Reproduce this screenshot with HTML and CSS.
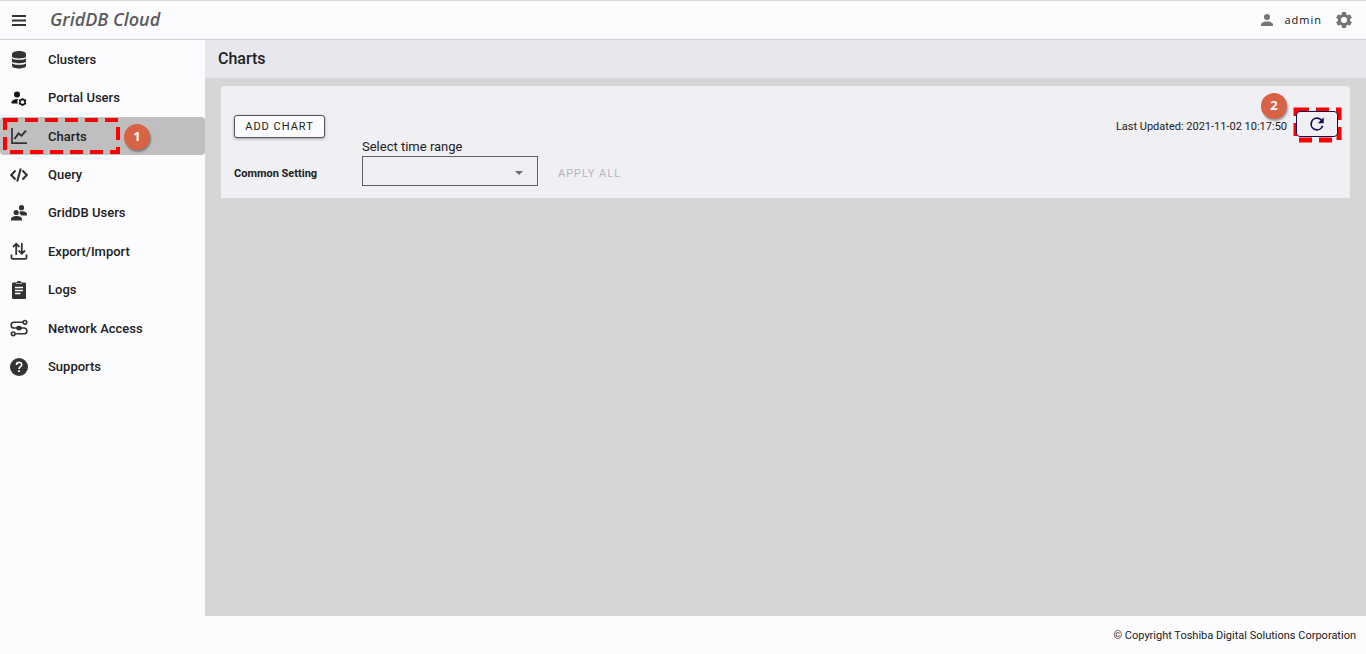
FILE: index.html
```
<!DOCTYPE html>
<html lang="en">
<head>
    <meta charset="utf-8">
    <title>GridDB Cloud</title>
    <meta name="viewport" content="width=device-width, initial-scale=1.0">
    <link rel="stylesheet" href="styles.css">
</head>
<body>

<header class="topbar">
    <button class="icon-button" aria-label="Menu">
        <svg width="20" height="20" viewBox="0 0 20 20"><path d="M3 6h14M3 10.500h14M3 15h14" stroke="#333" stroke-width="1.900"/></svg>
    </button>
    <a class="logo" href="#">GridDB Cloud</a>
    <a class="user" href="#">
        <svg width="18" height="18" viewBox="0 0 24 24" fill="#757575"><path d="M12 4a4 4 0 1 1 0 8 4 4 0 0 1 0-8m0 10c4.400 0 8 1.800 8 4v2H4v-2c0-2.200 3.600-4 8-4z"/></svg>
        admin
    </a>
    <button class="icon-button" aria-label="Settings">
        <svg width="20" height="20" viewBox="0 0 24 24" fill="#757575"><path d="M19.140 12.940c.04-.3.06-.61.06-.94 0-.32-.02-.64-.07-.94l2.030-1.580a.49.49 0 0 0 .12-.61l-1.920-3.320a.49.49 0 0 0-.59-.22l-2.390.96c-.5-.38-1.030-.7-1.620-.94l-.36-2.540a.48.48 0 0 0-.48-.41h-3.840c-.24 0-.43.17-.47.41l-.36 2.540c-.59.24-1.130.57-1.620.94l-2.390-.96a.48.48 0 0 0-.59.22L2.740 8.870a.48.48 0 0 0 .12.61l2.030 1.580c-.05.3-.09.63-.09.94s.02.64.07.94l-2.030 1.580a.49.49 0 0 0-.12.61l1.920 3.320c.12.22.37.29.59.22l2.390-.96c.5.38 1.030.7 1.620.94l.36 2.540c.05.24.24.41.48.41h3.840c.24 0 .44-.17.47-.41l.36-2.540c.59-.24 1.130-.56 1.620-.94l2.390.96c.22.08.47 0 .59-.22l1.920-3.320a.48.48 0 0 0-.12-.61zM12 15.600a3.600 3.600 0 1 1 0-7.200 3.600 3.600 0 0 1 0 7.200z"/></svg>
    </button>
</header>

<div class="layout">
    <nav class="sidebar">
        <a class="nav-item" href="#">
            <svg width="18" height="20" viewBox="0 0 18 20" fill="#333"><path d="M2 5c0-4 14-4 14 0v2.500c0 2.500-14 2.500-14 0z"/><path d="M2 9.300c2 2 12 2 14 0v3.200c0 2.300-14 2.300-14 0z"/><path d="M2 14.200c2 2 12 2 14 0v2.800c0 3.300-14 3.300-14 0z"/></svg>
            Clusters
        </a>
        <a class="nav-item" href="#">
            <svg width="18" height="20" viewBox="0 0 18 20" fill="#111"><circle cx="7" cy="6.500" r="3"/><path d="M1.500 15.500v-1c0-2.300 3-3.500 6.500-3.500-.8 1.500-.8 3 0 4.500z"/><circle cx="12.500" cy="14" r="2.600" fill="none" stroke="#111" stroke-width="1.500"/><path d="M12.500 10v1.500m0 5V18M9 12l1.400.8m4.200 2.400 1.400.8M9 16l1.400-.8m4.200-2.400 1.400-.8" stroke="#111" stroke-width="1.500"/></svg>
            Portal Users
        </a>
        <a class="nav-item active" href="#">
            <svg width="18" height="20" viewBox="0 0 18 20" fill="none" stroke="#333"><path d="M2 2v15.200h15" stroke-width="1.700"/><path d="m4.500 13 4-5.500 3 2.200 4.500-5" stroke-width="2"/></svg>
            Charts
            <svg class="marker" width="118" height="36" viewBox="0 0 118 36"><rect x="2" y="2" width="113" height="32" fill="none" stroke="red" stroke-width="4" stroke-dasharray="13 7"/></svg>
            <span class="badge badge-nav">1</span>
        </a>
        <a class="nav-item" href="#">
            <svg width="18" height="20" viewBox="0 0 18 20" fill="none" stroke="#333" stroke-width="2.100"><path d="M5.500 5.500 1.200 10l4.300 4.500M12.500 5.500l4.300 4.500-4.300 4.500M10.800 3.500 7.200 16.500"/></svg>
            Query
        </a>
        <a class="nav-item" href="#">
            <svg width="18" height="20" viewBox="0 0 18 20" fill="#333"><circle cx="11.500" cy="4.700" r="2.600"/><path d="M9.500 8.500c4-1 7.500.3 7.500 2.700v1.300h-5.500c-.6-.7-1.200-1-2-1.400.5-.8.500-1.700 0-2.600z"/><circle cx="6.200" cy="9.500" r="2.600"/><path d="M1 17.500v-1.300c0-4.300 11-4.300 11 0v1.300z"/></svg>
            GridDB Users
        </a>
        <a class="nav-item" href="#">
            <svg width="18" height="20" viewBox="0 0 18 20" fill="none" stroke="#333" stroke-width="1.800"><path d="M1.500 13.500v3.200c0 .8.500 1.200 1.200 1.200h12.600c.7 0 1.200-.4 1.200-1.200v-3.200M6.200 14V3M3 6l3.200-3.300L9.400 6M11.800 2v10M8.600 9.500l3.200 3.300L15 9.500"/></svg>
            Export/Import
        </a>
        <a class="nav-item" href="#">
            <svg width="18" height="20" viewBox="0 0 18 20"><path fill="#333" d="M3.500 2.500h3c.5-2 4.500-2 5 0h3c1 0 1.500.5 1.500 1.500v13.500c0 1-.5 1.500-1.500 1.500h-11c-1 0-1.500-.5-1.500-1.500V4c0-1 .5-1.500 1.500-1.500z"/><path d="M5 7.500h8M5 10.500h8M5 13.500h5.500" stroke="#fff" stroke-width="1.300"/><path d="M6 3.500h6" stroke="#aaa"/></svg>
            Logs
        </a>
        <a class="nav-item" href="#">
            <svg width="18" height="20" viewBox="0 0 18 20" fill="none" stroke="#333" stroke-width="1.600"><circle cx="15" cy="4.300" r="1.800"/><circle cx="3.200" cy="15.800" r="1.800"/><path d="M13.200 4.300H4a2.800 2.800 0 0 0 0 5.700h10a2.900 2.900 0 0 1 0 5.800H5"/><ellipse cx="9" cy="10" rx="2" ry="1.500" fill="#333"/></svg>
            Network Access
        </a>
        <a class="nav-item" href="#">
            <svg width="18" height="20" viewBox="0 0 18 20"><circle cx="9" cy="10" r="9" fill="#333"/><path d="M6.500 8c0-3.500 5.200-3.300 5.200-.3C11.700 9.700 9 9.700 9 12" fill="none" stroke="#fff" stroke-width="1.600"/><path d="M8.100 13.200h1.800V15H8.100z" fill="#fff"/></svg>
            Supports
        </a>
    </nav>

    <main class="content">
        <h1>Charts</h1>
        <section class="panel">
            <div class="panel-row">
                <button class="add-button">ADD CHART</button>
                <span class="updated">Last Updated: 2021-11-02 10:17:50</span>
                <div class="refresh">
                    <button class="refresh-button" aria-label="Refresh">
                        <svg width="20" height="20" viewBox="0 0 24 24" fill="#10104f"><path d="M17.650 6.350A7.960 7.960 0 0 0 12 4a8 8 0 1 0 7.730 10h-2.080A6 6 0 1 1 12 6c1.660 0 3.140.69 4.220 1.780L13 11h7V4z"/></svg>
                    </button>
                    <svg class="marker" width="50" height="36" viewBox="0 0 50 36"><rect x="3" y="3" width="43" height="30" fill="none" stroke="red" stroke-width="5" stroke-dasharray="13 7"/></svg>
                    <span class="badge badge-refresh">2</span>
                </div>
            </div>
            <div class="setting-row">
                <span class="setting-title">Common Setting</span>
                <div class="field">
                    <label for="timeRange">Select time range</label>
                    <select id="timeRange">
                        <option value=""></option>
                    </select>
                </div>
                <button class="apply-button" disabled>APPLY ALL</button>
            </div>
        </section>
    </main>
</div>

<footer>© Copyright Toshiba Digital Solutions Corporation</footer>

</body>
</html>
```

FILE: styles.css
```
* {
    box-sizing: border-box;
}
body {
    margin: 0;
    min-height: 100vh;
    display: flex;
    flex-direction: column;
    font-family: Roboto, "Liberation Sans", sans-serif;
    font-size: 13px;
    color: #212121;
    background: #fcfcfe;
}
a {
    color: inherit;
    text-decoration: none;
}
button {
    font-family: inherit;
    padding: 0;
    cursor: pointer;
}
svg {
    display: block;
    flex-shrink: 0;
}
.topbar {
    height: 40px;
    display: flex;
    align-items: center;
    padding: 0 12px 0 9px;
    border-top: 1px solid #d6d6d8;
    border-bottom: 1px solid #d0d0d4;
}
.icon-button {
    border: 0;
    background: none;
}
.logo {
    margin-left: 21px;
    padding-bottom: 3px;
    font-family: "Open Sans", "Noto Sans", sans-serif;
    font-size: 18px;
    font-weight: 600;
    font-style: italic;
    line-height: 24px;
    color: #5c5c5c;
}
.user {
    display: flex;
    align-items: center;
    gap: 8px;
    margin-left: auto;
    margin-right: 12px;
    font-family: "Open Sans", sans-serif;
    font-size: 11px;
    letter-spacing: 1px;
    line-height: 16px;
    color: #111;
}
.layout {
    flex: 1;
    display: flex;
}
.sidebar {
    width: 205px;
    height: 346px;
    display: flex;
    flex-direction: column;
}
.nav-item {
    position: relative;
    flex: 1;
    display: flex;
    align-items: center;
    gap: 20px;
    padding-left: 10px;
    font-weight: 500;
}
.nav-item.active {
    background: #bfbfbf;
    border-radius: 4px;
}
.marker {
    position: absolute;
    top: 1px;
    left: 3px;
    pointer-events: none;
}
.badge {
    position: absolute;
    width: 26px;
    height: 26px;
    border-radius: 50%;
    background: #d86344;
    box-shadow: 1px 2px 2px rgba(0, 0, 0, 0.35);
    color: #fff;
    font-family: "Open Sans", sans-serif;
    font-size: 13px;
    font-weight: bold;
    line-height: 25px;
    text-align: center;
}
.badge-nav {
    top: 7px;
    left: 124px;
}
.content {
    flex: 1;
    background: #d6d6d6;
}
h1 {
    margin: 0;
    padding: 0 13px;
    background: #e7e7ed;
    font-size: 16px;
    font-weight: 500;
    line-height: 38px;
}
.panel {
    margin: 8px 16px;
    padding: 22px 9px 12px 13px;
    border-radius: 4px 4px 0 0;
    background: #f0eff4;
}
.panel-row {
    display: flex;
    align-items: center;
    height: 36px;
}
.add-button {
    width: 91px;
    height: 23px;
    border: 1px solid #555;
    border-radius: 3px;
    background: #fcfcfe;
    box-shadow: 0 1px 3px rgba(0, 0, 0, 0.35);
    color: #212121;
    font-size: 11px;
    letter-spacing: 1px;
}
.updated {
    margin-left: auto;
    font-size: 11px;
}
.refresh {
    position: relative;
    margin-left: 6px;
    padding: 4px 3px 8px;
}
.refresh .marker {
    top: 0;
    left: 0;
}
.refresh-button {
    position: relative;
    z-index: 1;
    display: flex;
    align-items: center;
    justify-content: center;
    width: 42px;
    height: 26px;
    border: 1px solid #10104f;
    border-radius: 4px;
    background: #f0eff4;
}
.badge-refresh {
    top: -14px;
    left: -32px;
}
.setting-row {
    display: flex;
    align-items: flex-end;
    height: 42px;
}
.setting-title {
    width: 128px;
    font-size: 11px;
    font-weight: bold;
    line-height: 24px;
}
.field {
    display: flex;
    flex-direction: column;
    gap: 2px;
}
.field select {
    appearance: none;
    width: 176px;
    height: 30px;
    padding: 0 24px 0 8px;
    border: 1px solid #616161;
    border-radius: 0;
    background: url("data:image/svg+xml,%3Csvg xmlns='http://www.w3.org/2000/svg' width='8' height='4'%3E%3Cpath d='M0 0h8L4 4z' fill='%23706c69'/%3E%3C/svg%3E") no-repeat right 14px top 14px;
}
.apply-button {
    margin-left: 20px;
    border: 0;
    background: none;
    color: #b5b5b9;
    font-size: 11px;
    letter-spacing: 1px;
    line-height: 24px;
}
footer {
    padding: 1px 10px 0;
    font-size: 11px;
    line-height: 37px;
    text-align: right;
}
```
